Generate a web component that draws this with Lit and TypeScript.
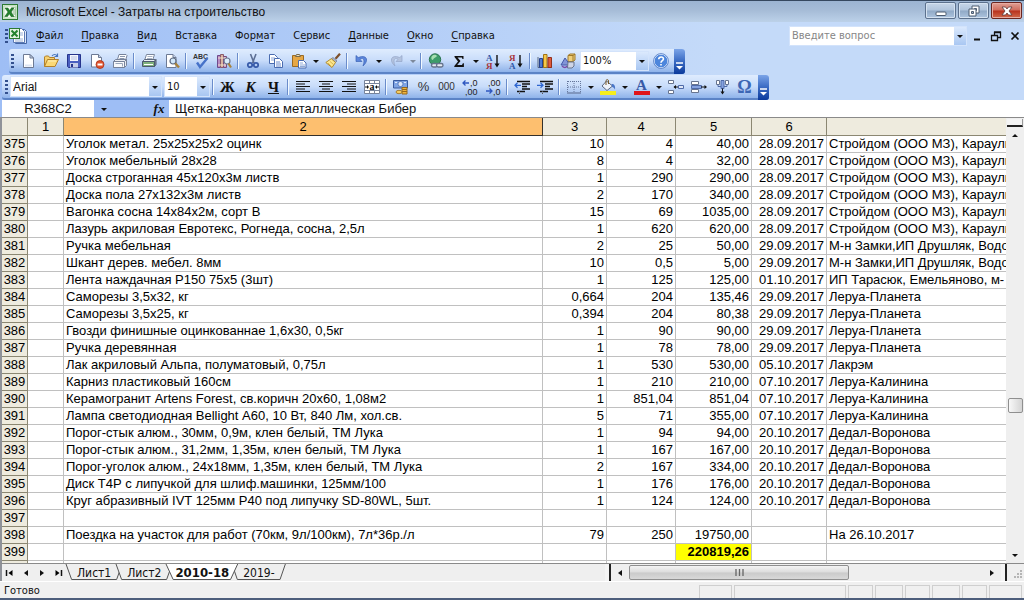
import { LitElement, html, css, svg, TemplateResult } from "lit";
import { customElement, property } from "lit/decorators.js";
import { classMap } from "lit/directives/class-map.js";

const excel = svg`
  <rect x="0.5" y="0.5" width="15" height="15" fill="#dff0dc" stroke="#2c7a33"/>
  <rect x="2" y="2" width="12" height="12" fill="#f4fbf2" stroke="#8fc48c" stroke-width=".6"/>
  <path d="M9.5 3.500h4v9h-4z" fill="#fff" stroke="#7fb37d" stroke-width=".6"/><path d="M10.500 6h3M10.500 8h3M10.500 10h3" stroke="#7fb37d"/>
  <path d="M3 4h3l1.500 2.500L9.500 4h2.500L9 8l3 4.500H9L7.300 9.700 5.500 12.500H2.800L6 8z" fill="#23822d" stroke="#145a1c" stroke-width=".5"/>`;

const page = svg`<path d="M3.500 1.500h6.500l3.500 3.500v9.500h-10z" fill="#fff" stroke="#6d7a94"/><path d="M10 1.500v3.500h3.500z" fill="#c9d5ea" stroke="#6d7a94"/><path d="M5 12.500h7" stroke="#dde5f2" stroke-width="2"/>`;

const printer = (c: string) => svg`
  <path d="M5.500 1.500h8l-2 6h-8z" fill="#fff" stroke="#7b879c"/><path d="M6.500 3.500h5M6 5.500h5" stroke="#a9b4c6"/>
  <path d="M1.500 8.500l2-2h11l-1 2z" fill="#eef1f6" stroke="#5d6a80"/>
  <path d="M1.500 8.500h12v5h-12z" fill="${c}" stroke="#4c596e"/><path d="M13.500 8.500l1.500-2v5l-1.500 2z" fill="#8793a8" stroke="#4c596e"/>
  <path d="M3 11.500h9" stroke="#fff"/>`;

const icons: Record<string, TemplateResult> = {
  excel,
  page,
  open: svg`<path d="M1.500 13.500v-9.500l1-1h3l1 1.500h5v2" fill="#f6d170" stroke="#b3812a"/><path d="M1.500 13.500l3-7h11l-3.500 7z" fill="#fbd975" stroke="#b3812a"/><path d="M5 8h8" stroke="#fff0b8"/><path d="M9 3c1.500-2 4-2 5 0M14.500 .5v3h-3" fill="none" stroke="#4a76bd" stroke-width="1.200"/>`,
  save: svg`<path d="M1.500 1.500h13v13h-12l-1-1z" fill="#4a5fc0" stroke="#26348c"/><path d="M4 2h8v6H4z" fill="#f4f6fd"/><path d="M5 4h6M5 6h6" stroke="#b6c0e0"/><path d="M4 10h8v4.500H4z" fill="#c6cee8"/><path d="M5 11h2v3H5z" fill="#26348c"/>`,
  deny: svg`<path d="M2.500 1.500h7l3 3v9.500h-10z" fill="#fff" stroke="#6d7a94"/><path d="M9.500 1.500v3h3" fill="#c9d5ea" stroke="#6d7a94"/><circle cx="11" cy="11.500" r="4" fill="#e0532f" stroke="#a93014" stroke-width=".8"/><path d="M8.500 11.500h5" stroke="#fff" stroke-width="2"/>`,
  mail: svg`<path d="M5.500 6.500l1.500-5h7l1 1-1.500 5" fill="#fff" stroke="#76829a"/><path d="M8 3.500h5M7.500 5.500h5" stroke="#8b97ad"/><path d="M1.500 8.500l2-2h11v6l-2 2h-11z" fill="#e9ecf2" stroke="#76829a"/><path d="M1.500 8.500h11v6h-11z" fill="#f8f9fb" stroke="#76829a"/><path d="M3.500 10.500h7v3" fill="none" stroke="#9aa5b8"/><path d="M12.500 8.500l2-2" stroke="#76829a"/>`,
  print: printer("#7fb07d"),
  preview: svg`<path d="M2.500 1.500h6.500l3 3v10h-9.500z" fill="#fff" stroke="#6d7a94"/><path d="M9 1.500v3h3" fill="#c9d5ea" stroke="#6d7a94"/><circle cx="9" cy="8" r="3" fill="#d2e8fa" stroke="#5d6a80" stroke-width="1.200"/><path d="M11.200 10.300l3.800 4.200" stroke="#a8833c" stroke-width="2.400"/>`,
  spell: svg`<text x="0" y="6" font-family="Liberation Sans" font-size="7" font-weight="700" fill="#333">ABC</text><path d="M4 9.500l3 4.500 7.500-9" fill="none" stroke="#4672c9" stroke-width="2.400"/>`,
  research: svg`<path d="M1.500 2.500h3v12h-3z" fill="#b98cc2" stroke="#6f4a8a"/><path d="M4.500 1.500h3v13h-3z" fill="#d9b3a0" stroke="#8a5a6a"/><path d="M7.500 3.500h3v11h-3z" fill="#c9a2cc" stroke="#7a4a7a"/><path d="M2 5h8M2 12h8" stroke="#f2e3c9"/><circle cx="11" cy="8" r="3" fill="#dcedfb" stroke="#6b7890" stroke-width="1.200"/><path d="M12.500 10.500l2.500 4" stroke="#a8833c" stroke-width="2.200"/>`,
  cut: svg`<path d="M5.500 1l3.500 9M11 1L7.500 10" stroke="#5d6f94" stroke-width="1.600"/><circle cx="5" cy="12" r="2.200" fill="none" stroke="#3659a8" stroke-width="1.700"/><circle cx="11" cy="12" r="2.200" fill="none" stroke="#3659a8" stroke-width="1.700"/>`,
  copy: svg`<path d="M1.500 1.500h5l3 3v6h-8z" fill="#fff" stroke="#4a6cb0"/><path d="M3 5h4M3 7h5" stroke="#8fa9d8"/><path d="M6.500 5.500h5l3 3v6h-8z" fill="#fff" stroke="#4a6cb0"/><path d="M8 9h4M8 11h5M8 13h5" stroke="#6d8ccc"/>`,
  paste: svg`<path d="M1.500 2.500h11v11h-11z" fill="#e6a745" stroke="#9a6a23"/><path d="M4.500 3.500l1-2h3l1 2z" fill="#ece2c4" stroke="#776a4d"/><path d="M7.500 7.500h5l2.500 2.500v5h-7.500z" fill="#fff" stroke="#4a6cb0"/><path d="M9 10h3M9 12h5M9 13.500h5" stroke="#8fa9d8"/>`,
  brush: svg`<path d="M15 .8l-4.500 5" stroke="#7d4f2a" stroke-width="2.200"/><path d="M8 4.500l4 3.500-1.500 1.500-4.200-3.800z" fill="#a9b2c4" stroke="#6d7a94" stroke-width=".7"/><path d="M6.300 5.700l4.200 3.800-3.500 5L.8 9.500z" fill="#fbe68d" stroke="#b18a2d"/><path d="M3 10l3 3M5 8.500l3.500 3" stroke="#d9b450"/>`,
  undo: svg`<path d="M2 2.500v6h6l-2-2c3-2.500 5.500 0 3 6.500 6-5 4.500-12-4.800-8.500z" fill="#5c86dc" stroke="#3a62b5" stroke-width=".7"/>`,
  redo: svg`<path d="M14 2.500v6H8l2-2c-3-2.500-5.500 0-3 6.500C1 8 2.500 1 11.800 4.500z" fill="#b4c3de" stroke="#93a5c8" stroke-width=".7"/>`,
  link: svg`<circle cx="7" cy="6.500" r="5.700" fill="#3d9c6a" stroke="#28724e"/><path d="M4 3c2-2 4-1.500 5 0-1 2-3 1-4 4-2 0-2-3-1-4z" fill="#a5dfb1"/><rect x="3.500" y="10.500" width="6" height="3.500" rx="1.700" fill="#e6ecf5" stroke="#66738c" stroke-width="1.400"/><rect x="8.500" y="10.500" width="6.500" height="3.500" rx="1.700" fill="#e6ecf5" stroke="#66738c" stroke-width="1.400"/>`,
  sigma: svg`<path d="M3.500 3h9v3h-1l-.7-1.500H6.500L9.500 8l-3.300 4h4.800l.9-1.800h1V14H3.300v-1L7 8.500 3.500 4z" fill="#111"/>`,
  asc: svg`<text x="1" y="7.500" font-family="Liberation Serif" font-size="9" font-weight="700" fill="#2e57a8">А</text><text x="1" y="15.500" font-family="Liberation Serif" font-size="9" font-weight="700" fill="#a8343a">Я</text><path d="M12 2v10" stroke="#111" stroke-width="1.400"/><path d="M9.500 10.500h5L12 14.500z" fill="#111"/>`,
  desc: svg`<text x="1" y="7.500" font-family="Liberation Serif" font-size="9" font-weight="700" fill="#a8343a">Я</text><text x="1" y="15.500" font-family="Liberation Serif" font-size="9" font-weight="700" fill="#2e57a8">А</text><path d="M12 2v10" stroke="#111" stroke-width="1.400"/><path d="M9.500 10.500h5L12 14.500z" fill="#111"/>`,
  chart: svg`<path d="M1 4v10.500h14" fill="none" stroke="#5d6a80"/><path d="M2.500 5.500h3v9h-3z" fill="#4f79d0" stroke="#27438f"/><path d="M6.500 1.500h3.500v13H6.500z" fill="#f5c84a" stroke="#a27416"/><path d="M11 4.500h3.500v10H11z" fill="#de5a3c" stroke="#93301b"/>`,
  draw: svg`<path d="M8 2.500l2-1.500h5v6l-2 1.500H8z" fill="#f0cf7a" stroke="#a07a2a"/><path d="M8 2.500h5v6M13 2.500l2-1.500" fill="none" stroke="#a07a2a"/><path d="M1 12l4-7 5 7z" fill="#8294d8" stroke="#4458a8"/><path d="M8 9h6v4l-2 2H7.500z" fill="#cfd5e6" stroke="#68748e"/><path d="M2 13c2 2 4 2 5 0" fill="none" stroke="#7a4aa8" stroke-width="1.500"/>`,
  help: svg`<circle cx="8" cy="8" r="6.800" fill="#4d86dc" stroke="#dcebff"/><circle cx="8" cy="8" r="7.400" fill="none" stroke="#3a66b8" stroke-width=".7"/><path d="M5.700 6.300c.2-3.200 5-3 4.700-.2C10.200 7.700 8 7.500 8 9.700M8 11v1.500" fill="none" stroke="#fff" stroke-width="1.600"/>`,
  left: svg`<path d="M1 2.500h14M1 5h9M1 7.500h14M1 10h9M1 12.500h14" stroke="#111" stroke-width="1.200"/>`,
  center: svg`<path d="M1 2.500h14M4 5h8M1 7.500h14M4 10h8M1 12.500h14" stroke="#111" stroke-width="1.200"/>`,
  right: svg`<path d="M1 2.500h14M6 5h9M1 7.500h14M6 10h9M1 12.500h14" stroke="#111" stroke-width="1.200"/>`,
  merge: svg`<path d="M.5 1.500h15v13H.5z" fill="#fff" stroke="#77839a"/><path d="M.5 4.500h15M.5 11.500h15M5.500 1.500v3M10.500 1.500v3M5.500 11.500v3M10.500 11.500v3" stroke="#77839a"/><text x="5.500" y="10.500" font-family="Liberation Serif" font-size="10" font-weight="700" fill="#111">a</text><path d="M1 8h3M12 8h3" stroke="#111"/><path d="M3 6l2 2-2 2zM13 6l-2 2 2 2z" fill="#111"/>`,
  money: svg`<path d="M.5 1.500h14v7.500H.5z" fill="#7fa4e4" stroke="#385a9f"/><ellipse cx="7.500" cy="5" rx="2.500" ry="2.500" fill="#dfe9fb" stroke="#385a9f" stroke-width=".6"/><path d="M2 3.500h2M11 3.500h2" stroke="#dfe9fb"/><path d="M9 8.500h5v6.500H9z" fill="#f0b53e" stroke="#97691a"/><path d="M9 10.500h5M9 12.500h5" stroke="#97691a"/><ellipse cx="6" cy="13" rx="3" ry="1.700" fill="#f6cd63" stroke="#97691a" stroke-width=".8"/>`,
  incDec: svg`<path d="M1 4h6M3.500 1.500L1 4l2.500 2.500" fill="none" stroke="#2e57c0" stroke-width="1.300"/><text x="8" y="7" font-family="Liberation Sans" font-size="9" fill="#222">,0</text><text x="3" y="15.500" font-family="Liberation Sans" font-size="9" fill="#222">,00</text>`,
  decDec: svg`<path d="M1 12h6M4.500 9.500L7 12l-2.500 2.500" fill="none" stroke="#2e57c0" stroke-width="1.300"/><text x="3" y="7" font-family="Liberation Sans" font-size="9" fill="#222">,00</text><text x="8" y="15.500" font-family="Liberation Sans" font-size="9" fill="#222">,0</text>`,
  outdent: svg`<path d="M3 2.500h13M8 5h8M8 7.500h5M8 10h8M3 12.500h8" stroke="#111" stroke-width="1.300"/><path d="M1 6.300h6M3.500 3.800L1 6.300l2.500 2.500" fill="none" stroke="#2e66d0" stroke-width="1.300"/><path d="M5.500 12v3" stroke="#555" stroke-dasharray="1 1"/>`,
  indent: svg`<path d="M3 2.500h13M8 5h8M8 7.500h5M8 10h8M3 12.500h8" stroke="#111" stroke-width="1.300"/><path d="M0 6.300h6M3.500 3.800L6 6.300 3.500 8.800" fill="none" stroke="#2e66d0" stroke-width="1.300"/><path d="M5.500 12v3" stroke="#555" stroke-dasharray="1 1"/>`,
  borders: svg`<path d="M1.500 2v12M8 2v12M14.500 2v12M2 2.500h12M2 8h12" stroke="#66779c" stroke-dasharray="1 1"/><path d="M1 14h14" stroke="#66779c" stroke-width="1.200"/>`,
  fill: svg`<path d="M6.500 2l6 5-5.500 4.500-5-4.500z" fill="#eef2fa" stroke="#5d6a80"/><path d="M6 6V1.500c1-1.500 2.500-1 2.500.5v3" fill="none" stroke="#7a5b2a"/><path d="M11.500 5c3 0 4 2 3.500 5.500-1-1.500-1.500-2.500-3-2.500z" fill="#4a76c8"/><path d="M0 12h16v4H0z" fill="#f7ee1c"/>`,
  fontColor: svg`<text x="2" y="11" font-family="Liberation Serif" font-size="15" font-weight="700" fill="#375aa6">A</text><path d="M0 12h16v4H0z" fill="#e0151b"/>`,
  node1: svg`<path d="M.5 1.500h5v3h-5zM.5 11.500h5v3h-5z" fill="#fff" stroke="#67748f"/><path d="M10.500 6.500h5v3h-5z" fill="#dfe7f6" stroke="#4e6aa8"/><path d="M6 8h4" stroke="#111"/><path d="M8 6L5.500 8 8 10z" fill="#111"/>`,
  node2: svg`<path d="M.5 2.500h7v3h-7zM.5 10.500h7v3h-7z" fill="#fff" stroke="#67748f"/><path d="M.5 6.500h10v3H.5z" fill="#85a2df" stroke="#4e6aa8"/><path d="M10 8h5" stroke="#111"/><path d="M13.500 6l2.500 2-2.500 2z" fill="#111"/>`,
  node3: svg`<path d="M2.500 1.500h3v4h-3zM11.500 1.500h3v4h-3z" fill="#fff" stroke="#67748f"/><path d="M7 1.500h3v8H7z" fill="#85a2df" stroke="#4e6aa8"/><path d="M4 5.500v2h3M13 5.500v2h-3" fill="none" stroke="#4e6aa8"/><path d="M8.500 9.500v4" stroke="#111"/><path d="M6.500 12.500h4l-2 3z" fill="#111"/>`,
};

@customElement("x-icon")
class XIcon extends LitElement {
  @property() name = "page";
  static styles = css`
    :host { display: block; width: 16px; height: 16px; }
    svg { display: block; width: 100%; height: 100%; overflow: visible; }
  `;
  render() {
    return html`<svg viewBox="0 0 16 16" aria-hidden="true">${icons[this.name]}</svg>`;
  }
}

type Item = { k: "i" | "t" | "s" | "a"; v?: string; label?: string; cls?: string; off?: boolean };
const i = (v: string, label: string): Item => ({ k: "i", v, label });
const t = (v: string, label: string, cls: string): Item => ({ k: "t", v, label, cls });
const s: Item = { k: "s" };
const a: Item = { k: "a" };

const standard: Item[] = [
  i("page", "Создать"), i("open", "Открыть"), i("save", "Сохранить"), i("deny", "Разрешения"), i("mail", "Сообщение"), s,
  i("print", "Печать"), i("preview", "Предварительный просмотр"), s, i("spell", "Орфография"), i("research", "Справочные материалы"), s,
  i("cut", "Вырезать"), i("copy", "Копировать"), i("paste", "Вставить"), a, i("brush", "Формат по образцу"), s,
  i("undo", "Отменить"), a, i("redo", "Вернуть"), { k: "a", off: true }, s,
  i("link", "Гиперссылка"), i("sigma", "Автосумма"), a, i("asc", "По возрастанию"), i("desc", "По убыванию"), s,
  i("chart", "Мастер диаграмм"), i("draw", "Рисование"),
];
const formatting: Item[] = [
  s, t("Ж", "Полужирный", "serif"), t("К", "Курсив", "serif italic"), t("Ч", "Подчеркнутый", "serif under"), s,
  i("left", "По левому краю"), i("center", "По центру"), i("right", "По правому краю"), i("merge", "Объединить"), s,
  i("money", "Денежный формат"), t("%", "Процентный формат", "num"), t("000", "Формат с разделителями", "num small"), i("incDec", "Увеличить разрядность"), i("decDec", "Уменьшить разрядность"), s,
  i("outdent", "Уменьшить отступ"), i("indent", "Увеличить отступ"), s,
  i("borders", "Границы"), a, i("fill", "Цвет заливки"), a, i("fontColor", "Цвет шрифта"), a,
  i("node1", "Влияющие ячейки"), i("node2", "Зависимые ячейки"), i("node3", "Собрать"), t("Ω", "Символ", "serif omega"),
];

const menu: [string, string, string][] = [
  ["", "Ф", "айл"], ["", "П", "равка"], ["", "В", "ид"], ["Вст", "а", "вка"], ["Фор", "м", "ат"],
  ["С", "е", "рвис"], ["", "Д", "анные"], ["", "О", "кно"], ["", "С", "правка"],
];

const stroy = "Стройдом (ООО МЗ), Карауль";
const zamki = "М-н Замки,ИП Друшляк, Водо";
const rows: string[][] = [
  ["375", "Уголок метал. 25х25х25х2 оцинк", "10", "4", "40,00", "28.09.2017", stroy],
  ["376", "Уголок мебельный 28х28", "8", "4", "32,00", "28.09.2017", stroy],
  ["377", "Доска строганная 45х120х3м листв", "1", "290", "290,00", "28.09.2017", stroy],
  ["378", "Доска пола 27х132х3м листв", "2", "170", "340,00", "28.09.2017", stroy],
  ["379", "Вагонка сосна 14х84х2м, сорт В", "15", "69", "1035,00", "28.09.2017", stroy],
  ["380", "Лазурь акриловая Евротекс, Рогнеда, сосна, 2,5л", "1", "620", "620,00", "28.09.2017", stroy],
  ["381", "Ручка мебельная", "2", "25", "50,00", "29.09.2017", zamki],
  ["382", "Шкант дерев. мебел. 8мм", "10", "0,5", "5,00", "29.09.2017", zamki],
  ["383", "Лента наждачная Р150 75х5 (3шт)", "1", "125", "125,00", "01.10.2017", "ИП Тарасюк, Емельяново, м-"],
  ["384", "Саморезы 3,5х32, кг", "0,664", "204", "135,46", "29.09.2017", "Леруа-Планета"],
  ["385", "Саморезы 3,5х25, кг", "0,394", "204", "80,38", "29.09.2017", "Леруа-Планета"],
  ["386", "Гвозди финишные оцинкованнае 1,6х30, 0,5кг", "1", "90", "90,00", "29.09.2017", "Леруа-Планета"],
  ["387", "Ручка деревянная", "1", "78", "78,00", "29.09.2017", "Леруа-Планета"],
  ["388", "Лак акриловый Альпа, полуматовый, 0,75л", "1", "530", "530,00", "05.10.2017", "Лакрэм"],
  ["389", "Карниз пластиковый 160см", "1", "210", "210,00", "07.10.2017", "Леруа-Калинина"],
  ["390", "Керамогранит Artens Forest, св.коричн 20х60, 1,08м2", "1", "851,04", "851,04", "07.10.2017", "Леруа-Калинина"],
  ["391", "Лампа светодиодная Bellight А60, 10 Вт, 840 Лм, хол.св.", "5", "71", "355,00", "07.10.2017", "Леруа-Калинина"],
  ["392", "Порог-стык алюм., 30мм, 0,9м, клен белый, ТМ Лука", "1", "94", "94,00", "20.10.2017", "Дедал-Воронова"],
  ["393", "Порог-стык алюм., 31,2мм, 1,35м, клен белый, ТМ Лука", "1", "167", "167,00", "20.10.2017", "Дедал-Воронова"],
  ["394", "Порог-уголок алюм., 24х18мм, 1,35м, клен белый, ТМ Лука", "2", "167", "334,00", "20.10.2017", "Дедал-Воронова"],
  ["395", "Диск Т4Р с липучкой для шлиф.машинки, 125мм/100", "1", "176", "176,00", "20.10.2017", "Дедал-Воронова"],
  ["396", "Круг абразивный IVT 125мм Р40 под липучку SD-80WL, 5шт.", "1", "124", "124,00", "20.10.2017", "Дедал-Воронова"],
  ["397", "", "", "", "", "", ""],
  ["398", "Поездка на участок для работ (70км, 9л/100км), 7л*36р./л", "79", "250", "19750,00", "", "На 26.10.2017"],
  ["399", "", "", "", "220819,26", "", ""],
  ["", "", "", "", "", "", ""],
];

const tri = (d: "up" | "down" | "left" | "right") => {
  const p = { up: "M1 6h6L4 3z", down: "M1 3h6L4 6z", left: "M6 1v6L2 4z", right: "M2 1v6l4-3z" }[d];
  return html`<svg class="tri" viewBox="0 0 8 8" aria-hidden="true"><path d=${p} /></svg>`;
};

@customElement("app-root")
class AppRoot extends LitElement {
  static styles = css`
    :host {
      display: flex; flex-direction: column; height: 100vh; overflow: hidden;
      font: 11px/16px "DejaVu Sans Condensed", "Noto Sans", sans-serif; color: #111; background: #f0f0f0;
    }
    * { box-sizing: border-box; }
    button, input, select { font: inherit; color: inherit; border: 0; padding: 0; margin: 0; background: none; border-radius: 0; }
    button { display: flex; align-items: center; justify-content: center; }
    svg { display: block; overflow: visible; }
    .tri { width: 8px; height: 8px; flex: none; fill: #111; }

    .title { flex: none; height: 22px; display: flex; align-items: center; gap: 8px; padding: 0 2px; border-top: 1px solid #36485f; background: linear-gradient(#9cb4d2, #a6bcd7 45%, #bcd1e9); }
    .title h1 { flex: 1; margin: 0; font: 12px/16px "Liberation Sans", sans-serif; }
    .wins { display: flex; gap: 2px; align-self: flex-start; margin-top: 1px; }
    .win { width: 31px; height: 17px; border: 1px solid #5c718d; border-radius: 2px; background: linear-gradient(#c7d6e8, #b0c4dc 48%, #90a9c6 52%, #adc4df); box-shadow: inset 0 0 0 1px #d5e2f1; }
    .win svg { width: 14px; height: 12px; }
    .win.close { border-color: #6b2620; background: linear-gradient(#e0a095, #cf6c5c 48%, #b8301c 52%, #d06a4c); box-shadow: inset 0 0 0 1px #e6aca2; }

    .top { flex: none; background: linear-gradient(90deg, #9ebef5, #c4daf9 70%); }
    .menubar { display: flex; align-items: center; height: 27px; padding: 0 0 0 5px; }
    .handle { flex: none; width: 3px; height: 14px; background: repeating-linear-gradient(#33508e 0 2px, transparent 2px 4px); }
    .logo { position: relative; width: 18px; height: 18px; margin: 0 0 0 1px; }
    .logo svg { width: 18px; height: 18px; }
    .menus { display: flex; flex: 1; }
    .menus button { padding: 0 9px; white-space: pre; }
    .menus span { display: block; }
    u { text-underline-offset: 2px; }
    .combo { position: relative; display: flex; background: #fff; border: 1px solid #d3e3fb; }
    .combo select, .combo input { appearance: none; width: 100%; padding: 0 2px; outline: 0; }
    .combo .drop { position: absolute; right: 0; top: 0; bottom: 0; width: 12px; display: flex; align-items: center; justify-content: center; background: linear-gradient(#dbe9fd, #a9c7f2); pointer-events: none; }
    .combo.ask { width: 178px; height: 20px; }
    .combo.ask input::placeholder { color: #868686; opacity: 1; }
    .docs { display: flex; }
    .docs button { width: 19px; height: 18px; }
    .docs svg { width: 12px; height: 12px; }

    .bar { display: flex; width: max-content; height: 25px; align-items: center; border-radius: 3px; border-bottom: 2px solid #5b83c6; background: linear-gradient(#dfecfe, #c8dcfa 50%, #8fb3ea); }
    .bar.std { margin-left: 9px; padding-left: 2px; }
    .bar.fmt { margin: 1px 0 0 2px; padding-left: 3px; }
    .bar .handle { margin-right: 2px; }
    .tool { width: 23px; height: 22px; flex: none; }
    .arrow { width: 11px; height: 22px; flex: none; }
    .arrow.off { opacity: .4; }
    .sep { flex: none; width: 6px; height: 16px; border-left: 2px solid transparent; background: linear-gradient(90deg, #6a8ccb 1px, #f1f9ff 1px 2px, transparent 2px); background-clip: padding-box; }
    .combo.zoom { width: 69px; height: 20px; margin-left: 1px; }
    .combo.font { width: 152px; height: 21px; font: 12px/16px "Liberation Sans", sans-serif; }
    .combo.size { width: 46px; height: 21px; margin-left: 2px; }
    .serif { font: bold 15px/18px "Liberation Serif", serif; }
    .italic { font-style: italic; }
    .under { text-decoration: underline; }
    .omega { color: #3c66b4; font-size: 18px; }
    .num { font: 13px/16px "Liberation Sans", sans-serif; color: #333; }
    .small { font-size: 10px; }
    .cap { width: 11px; height: 25px; margin: 0 0 -2px 2px; align-self: flex-end; align-items: flex-end; padding-bottom: 4px; border-radius: 0 3px 3px 0; background: linear-gradient(#7ba4e8, #3f6fc6 45%, #0b3a9c); }
    .cap svg { width: 7px; height: 8px; }

    .formula { flex: none; display: flex; height: 17px; background: #9ebef5; padding-left: 2px; font: 13px/17px "Liberation Sans", sans-serif; }
    .formula input { background: #fff; height: 17px; outline: 0; }
    .name { width: 92px; text-align: center; }
    .namedrop { width: 19px; }
    .fx { width: 20px; margin-left: 36px; font: italic bold 13px/16px "Liberation Serif", serif; }
    .content { flex: 1; min-width: 0; padding: 0 6px; }

    .work { flex: 1; min-height: 0; display: flex; border-top: 1px solid #8a8a8a; border-left: 2px solid #8f9299; }
    .sheet { flex: 1; min-width: 0; overflow: hidden; background: #fff; }
    table { width: 100%; table-layout: fixed; border-spacing: 0; font: 13px/16px "Liberation Sans", sans-serif; color: #000; }
    td, th { height: 17px; padding: 0 2px; border-right: 1px solid #c0c0c0; border-bottom: 1px solid #c0c0c0; overflow: hidden; white-space: nowrap; font-weight: normal; text-align: right; }
    thead th { height: 18px; line-height: 17px; text-align: center; }
    th { background: #eeebde; border-color: #8b8772; }
    tbody th { text-align: center; padding: 0; }
    th.sel { background: #fdbf6f; border-right-color: #34302a; border-bottom-color: #34302a; }
    td.l { text-align: left; }
    td:last-child, th:last-child { border-right: 0; }
    td.sum { background: #ff0; font-weight: bold; }
    .c0 { width: 26px; } .c1 { width: 36px; } .c2 { width: 479px; } .c3 { width: 64px; }
    .c4 { width: 69px; } .c5 { width: 76px; } .c6 { width: 75px; }

    .vscroll { flex: none; width: 18px; display: flex; flex-direction: column; align-items: center; background: #efefef; }
    .split { flex: none; width: 16px; height: 8px; margin-top: 1px; border-bottom: 2px solid #222; border-right: 1px solid #999; background: #f4f4f4; }
    .vscroll button { width: 16px; height: 16px; flex: none; }
    .before { flex: 260; } .after { flex: 136; }
    .vscroll .vthumb { width: 15px; height: 15px; border: 1px solid #8f8f8f; border-radius: 2px; background: linear-gradient(90deg, #f8f8f8, #d4d4d4); }

    .bottom { flex: none; height: 18px; display: flex; border-top: 1px solid #8a8a8a; border-left: 2px solid #8f9299; background: #efefef; }
    .nav { display: flex; width: 64px; flex: none; }
    .nav button { width: 17px; }
    .nav svg { width: 10px; height: 8px; }
    .tabs { flex: 1; display: flex; min-width: 0; font-size: 12px; }
    .tab { position: relative; height: 17px; padding: 0 11px; margin-right: -6px; }
    .tab svg { position: absolute; inset: 0; width: 100%; height: 16px; }
    .tab path { fill: #efefef; stroke: #555; vector-effect: non-scaling-stroke; }
    .tab span { position: relative; }
    .tab.on { z-index: 1; font-size: 13px; font-weight: bold; padding: 0 9px; }
    .tab.on path { fill: #fff; }
    .grab { flex: none; width: 6px; border-right: 2px solid #222; background: #f4f4f4; }
    .hscroll { width: 390px; display: flex; align-items: center; }
    .hscroll button { width: 18px; height: 16px; flex: none; }
    .hscroll .hthumb { flex: 219; height: 15px; border: 1px solid #8f8f8f; border-radius: 2px; background: linear-gradient(#f4f4f4, #dcdcdc 48%, #cacaca 52%, #d8d8d8); }
    .hthumb svg { width: 9px; height: 7px; }
    .rest { flex: 134; }
    .grip { width: 17px; display: flex; align-items: flex-end; justify-content: flex-end; padding: 2px; }
    .grip svg { width: 9px; height: 9px; }

    .status { flex: none; height: 19px; display: flex; align-items: flex-end; gap: 2px; padding: 0 2px 0 4px; border-top: 1px solid #fff; border-bottom: 2px solid #4d5e7c; }
    .status span { flex: 1; line-height: 14px; }
    .status i { height: 13px; border: 1px solid #cfcfcf; border-bottom: 0; }
    .p0 { width: 33px; } .p1 { width: 112px; } .p2 { width: 25px; } .p3 { width: 28px; }
  `;

  private item(it: Item) {
    if (it.k === "s") return html`<div class="sep"></div>`;
    if (it.k === "a") return html`<button class=${classMap({ arrow: true, off: !!it.off })} aria-label="Список">${tri("down")}</button>`;
    if (it.k === "t") return html`<button class="tool ${it.cls}" aria-label=${it.label!}>${it.v}</button>`;
    return html`<button class="tool" aria-label=${it.label!}><x-icon name=${it.v!}></x-icon></button>`;
  }

  private cap() {
    return html`<button class="cap" aria-label="Параметры панели"><svg viewBox="0 0 7 8"><path d="M0 1h7" stroke="#fff" stroke-width="1.500" /><path d="M0 4h7L3.500 7.500z" fill="#fff" /></svg></button>`;
  }

  private combo(cls: string, label: string, value: string) {
    return html`<div class="combo ${cls}"><select aria-label=${label}><option>${value}</option></select><div class="drop">${tri("down")}</div></div>`;
  }

  private tab(name: string, on = false) {
    return html`<button class=${classMap({ tab: true, on })}>
      <svg viewBox="0 0 60 16" preserveAspectRatio="none"><path d="M0 0L6 15.500H54L60 0" /></svg><span>${name}</span>
    </button>`;
  }

  render() {
    return html`
      <header class="title">
        <x-icon name="excel"></x-icon>
        <h1>Microsoft Excel - Затраты на строительство</h1>
        <div class="wins">
          <button class="win" aria-label="Свернуть"><svg viewBox="0 0 14 12"><rect x="2" y="7" width="10" height="3.500" rx="1" fill="#fff" stroke="#4d5c70" /></svg></button>
          <button class="win" aria-label="Восстановить"><svg viewBox="0 0 14 12"><path d="M5 1h7v7H5z" fill="#fff" stroke="#4d5c70" /><path d="M7.500 3.500h2v2h-2z" fill="#9db3cd" stroke="#4d5c70" /><path d="M2 4h7v7H2z" fill="#fff" stroke="#4d5c70" /><path d="M4.500 6.500h2v2h-2z" fill="#9db3cd" stroke="#4d5c70" /></svg></button>
          <button class="win close" aria-label="Закрыть"><svg viewBox="0 0 14 12"><path d="M2 2h3.500L7 4l1.500-2H12L9 6l3 4H8.500L7 8l-1.500 2H2l3-4z" fill="#fff" stroke="#5a3a3a" stroke-width=".8" /></svg></button>
        </div>
      </header>
      <div class="top">
        <nav class="menubar">
          <div class="handle"></div>
          <div class="logo"><svg viewBox="0 0 18 18"><path d="M6.500 2.500h9l2 2v12h-11z" fill="#dfe8f8" stroke="#4466a5" /><path d="M4.500 1.500h8l3 3v11h-11z" fill="#fff" stroke="#5c7ab5" /><path d="M11 6h3M11 8h3M6 12h8M6 14h8" stroke="#9bb0d6" /><rect x=".5" y="1.500" width="10" height="10" fill="#e4f3e1" stroke="#2c7a33" /><path d="M2.500 3.500L8.500 9.500M8.500 3.500L2.500 9.500" stroke="#23822d" stroke-width="2" /></svg></div>
          <div class="menus">${menu.map(([x, y, z]) => html`<button><span>${x}<u>${y}</u>${z}</span></button>`)}</div>
          <div class="combo ask"><input type="text" placeholder="Введите вопрос" aria-label="Введите вопрос" /><div class="drop">${tri("down")}</div></div>
          <div class="docs">
            <button aria-label="Свернуть книгу"><svg viewBox="0 0 12 12"><path d="M3 9.500h6" stroke="#111" stroke-width="2" /></svg></button>
            <button aria-label="Восстановить книгу"><svg viewBox="0 0 12 12"><path d="M4.500 5V2.500h6v5H8M4 2h7M1.500 5.500h6v5h-6zM1 5.500h7" fill="none" stroke="#111" stroke-width="1.300" /></svg></button>
            <button aria-label="Закрыть книгу"><svg viewBox="0 0 12 12"><path d="M2.500 2.500l7 7M9.500 2.500l-7 7" stroke="#111" stroke-width="1.700" /></svg></button>
          </div>
        </nav>
        <div class="bar std">
          <div class="handle"></div>
          ${standard.map((x) => this.item(x))}
          ${this.combo("zoom", "Масштаб", "100%")}
          ${this.item(i("help", "Справка"))}
          ${this.cap()}
        </div>
        <div class="bar fmt">
          <div class="handle"></div>
          ${this.combo("font", "Шрифт", "Arial")}
          ${this.combo("size", "Размер", "10")}
          ${formatting.map((x) => this.item(x))}
          ${this.cap()}
        </div>
      </div>
      <div class="formula">
        <input class="name" aria-label="Имя" .value=${"R368C2"} />
        <button class="namedrop" aria-label="Список имён">${tri("down")}</button>
        <button class="fx" aria-label="Вставка функции">fx</button>
        <input class="content" aria-label="Формула" .value=${"Щетка-кранцовка металлическая Бибер"} />
      </div>
      <main class="work">
        <div class="sheet">
          <table>
            <colgroup><col class="c0" /><col class="c1" /><col class="c2" /><col class="c3" /><col class="c4" /><col class="c5" /><col class="c6" /><col /></colgroup>
            <thead><tr><th></th><th>1</th><th class="sel">2</th><th>3</th><th>4</th><th>5</th><th>6</th><th></th></tr></thead>
            <tbody>
              ${rows.map((r) => html`<tr>
                <th>${r[0]}</th><td></td><td class="l">${r[1]}</td><td>${r[2]}</td><td>${r[3]}</td>
                <td class=${classMap({ sum: r[0] === "399" })}>${r[4]}</td><td>${r[5]}</td><td class="l">${r[6]}</td>
              </tr>`)}
            </tbody>
          </table>
        </div>
        <div class="vscroll">
          <div class="split"></div>
          <button aria-label="Вверх">${tri("up")}</button>
          <div class="before"></div>
          <button class="vthumb" aria-label="Ползунок"></button>
          <div class="after"></div>
          <button aria-label="Вниз">${tri("down")}</button>
        </div>
      </main>
      <div class="bottom">
        <div class="nav">
          <button aria-label="Первый лист"><svg viewBox="0 0 10 8"><path d="M1.500 1v6" stroke="#111" stroke-width="1.500" /><path d="M7.500 1v6L3.500 4z" /></svg></button>
          <button aria-label="Предыдущий лист">${tri("left")}</button>
          <button aria-label="Следующий лист">${tri("right")}</button>
          <button aria-label="Последний лист"><svg viewBox="0 0 10 8"><path d="M8.500 1v6" stroke="#111" stroke-width="1.500" /><path d="M2.500 1v6l4-3z" /></svg></button>
        </div>
        <div class="tabs">${this.tab("Лист1")}${this.tab("Лист2")}${this.tab("2010-18", true)}${this.tab("2019-")}</div>
        <div class="grab"></div>
        <div class="hscroll">
          <button aria-label="Влево">${tri("left")}</button>
          <button class="hthumb" aria-label="Ползунок"><svg viewBox="0 0 9 7"><path d="M1 0v7M4.500 0v7M8 0v7" stroke="#666" stroke-width="1.300" /></svg></button>
          <div class="rest"></div>
          <button aria-label="Вправо">${tri("right")}</button>
        </div>
        <div class="grab"></div>
        <div class="grip"><svg viewBox="0 0 9 9"><path d="M7 1h2M4 4h2M7 4h2M1 7h2M4 7h2M7 7h2" stroke="#b5b5b5" stroke-width="2" /></svg></div>
      </div>
      <footer class="status">
        <span>Готово</span>
        <i class="p0"></i><i class="p1"></i><i class="p2"></i><i class="p3"></i><i class="p2"></i><i class="p3"></i><i class="p2"></i><i class="p0"></i>
      </footer>
    `;
  }
}
